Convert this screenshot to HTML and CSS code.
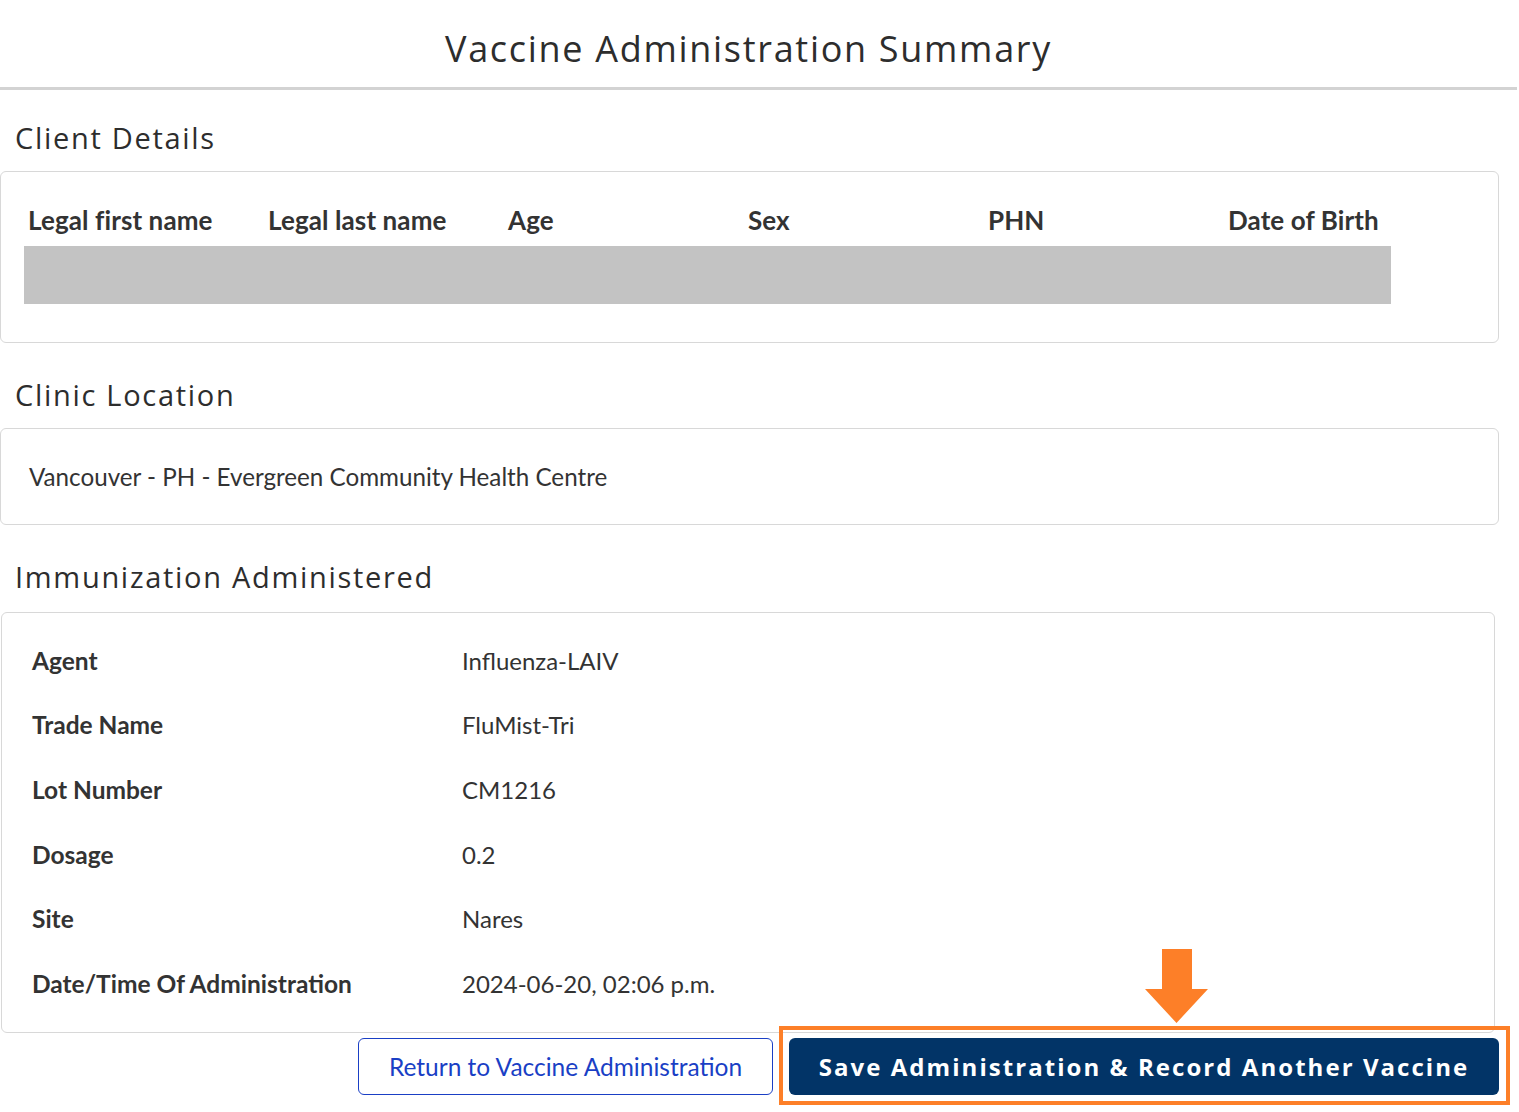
FILE: index.html
```html
<!DOCTYPE html>
<html lang="en">
<head>
<meta charset="utf-8">
<title>Vaccine Administration Summary</title>
<link rel="stylesheet" href="styles.css">
</head>
<body>
<header class="page-header">
  <h1 class="page-title">Vaccine Administration Summary</h1>
</header>

<main class="content">
  <section class="section section-first">
    <h2 class="section-title">Client Details</h2>
    <div class="card card-client">
      <div class="client-grid">
        <div class="col-head">Legal first name</div>
        <div class="col-head">Legal last name</div>
        <div class="col-head">Age</div>
        <div class="col-head">Sex</div>
        <div class="col-head">PHN</div>
        <div class="col-head">Date of Birth</div>
        <div class="redacted"></div>
      </div>
    </div>
  </section>

  <section class="section">
    <h2 class="section-title">Clinic Location</h2>
    <div class="card card-clinic">
      <p class="clinic-name">Vancouver - PH - Evergreen Community Health Centre</p>
    </div>
  </section>

  <section class="section section-immunization">
    <h2 class="section-title">Immunization Administered</h2>
    <div class="card card-immunization">
      <dl class="details">
        <div class="detail-row"><dt>Agent</dt><dd>Influenza-LAIV</dd></div>
        <div class="detail-row"><dt>Trade Name</dt><dd>FluMist-Tri</dd></div>
        <div class="detail-row"><dt>Lot Number</dt><dd>CM1216</dd></div>
        <div class="detail-row"><dt>Dosage</dt><dd>0.2</dd></div>
        <div class="detail-row"><dt>Site</dt><dd>Nares</dd></div>
        <div class="detail-row"><dt>Date/Time Of Administration</dt><dd>2024-06-20, 02:06 p.m.</dd></div>
      </dl>
    </div>
  </section>

  <div class="actions">
    <button class="btn btn-secondary" type="button">Return to Vaccine Administration</button>
    <div class="primary-wrap">
      <button class="btn btn-primary" type="button">Save Administration &amp; Record Another Vaccine</button>
      <span class="highlight-box" aria-hidden="true"></span>
      <svg class="highlight-arrow" width="63" height="74" viewBox="0 0 63 74" aria-hidden="true">
        <polygon points="17,0 47,0 47,40 63,40 31.5,74 0,40 17,40" fill="#fd7f28"/>
      </svg>
    </div>
  </div>
</main>
</body>
</html>
```

FILE: styles.css
```css
* {
  box-sizing: border-box;
}

html, body {
  margin: 0;
  padding: 0;
  background: #ffffff;
}

body {
  font-family: Lato, "Liberation Sans", sans-serif;
  color: #333333;
  width: 1519px;
  min-height: 1112px;
  padding-bottom: 20px;
}

.page-header {
  height: 90px;
  border-bottom: 3px solid #d3d3d3;
  margin-right: 2px;
  padding-right: 20px;
  display: flex;
  align-items: center;
  justify-content: center;
}

.page-title {
  margin: 0;
  padding-top: 10px;
  font-family: "Open Sans", "Noto Sans", sans-serif;
  font-weight: 500;
  font-size: 36px;
  letter-spacing: 1.7px;
  color: #2d2d2d;
}

.section-title {
  margin: 35px 0 16px 15px;
  font-family: "Open Sans", "Noto Sans", sans-serif;
  font-weight: 400;
  font-size: 29px;
  line-height: 34px;
  letter-spacing: 1.7px;
  color: #2d2d2d;
}

.section-first .section-title {
  margin-top: 31px;
}

.section-immunization .section-title {
  margin-bottom: 18px;
}

.card {
  border: 1px solid #d8d8d8;
  border-radius: 6px;
  margin-right: 20px;
}

.card-client {
  padding: 23px 0 38px 23px;
}

.client-grid {
  display: grid;
  grid-template-columns: repeat(5, 240px) 1fr;
  width: 1367px;
}

.col-head {
  height: 51px;
  line-height: 50px;
  padding-left: 4px;
  font-size: 26px;
  font-weight: 700;
  color: #333333;
  letter-spacing: 0.1px;
}

.redacted {
  grid-column: 1 / -1;
  height: 58px;
  background: #c3c3c3;
}

.card-clinic {
  height: 97px;
  display: flex;
  align-items: center;
  padding: 0 28px;
}

.clinic-name {
  margin: 0;
  font-size: 24.2px;
  color: #333333;
}

.card-immunization {
  margin-left: 1px;
  margin-right: 24px;
  padding: 15px 0 16px 30px;
}

.details {
  margin: 0;
}

.detail-row {
  display: flex;
  align-items: center;
  height: 64.6px;
}

.detail-row dt {
  width: 430px;
  font-size: 24.5px;
  font-weight: 700;
  color: #333333;
}

.detail-row dd {
  margin: 0;
  font-size: 24px;
  color: #333333;
}

.actions {
  display: flex;
  justify-content: flex-end;
  gap: 16px;
  margin-top: 5px;
  padding-right: 20px;
}

.btn {
  height: 57px;
  border-radius: 6px;
  cursor: pointer;
}

.btn-secondary {
  width: 415px;
  background: #ffffff;
  border: 1px solid #1a3fc5;
  color: #1a3fc5;
  font-family: Lato, sans-serif;
  font-size: 24.5px;
}

.primary-wrap {
  position: relative;
}

.btn-primary {
  width: 710px;
  background: #023467;
  border: none;
  color: #ffffff;
  font-family: "Open Sans", "Noto Sans", sans-serif;
  font-weight: 700;
  font-size: 24px;
  letter-spacing: 2.05px;
}

.highlight-box {
  position: absolute;
  top: -12px;
  left: -10px;
  right: -11px;
  bottom: -10px;
  border: 4px solid #fd7f28;
  pointer-events: none;
}

.highlight-arrow {
  position: absolute;
  left: 356px;
  top: -89px;
}
```
